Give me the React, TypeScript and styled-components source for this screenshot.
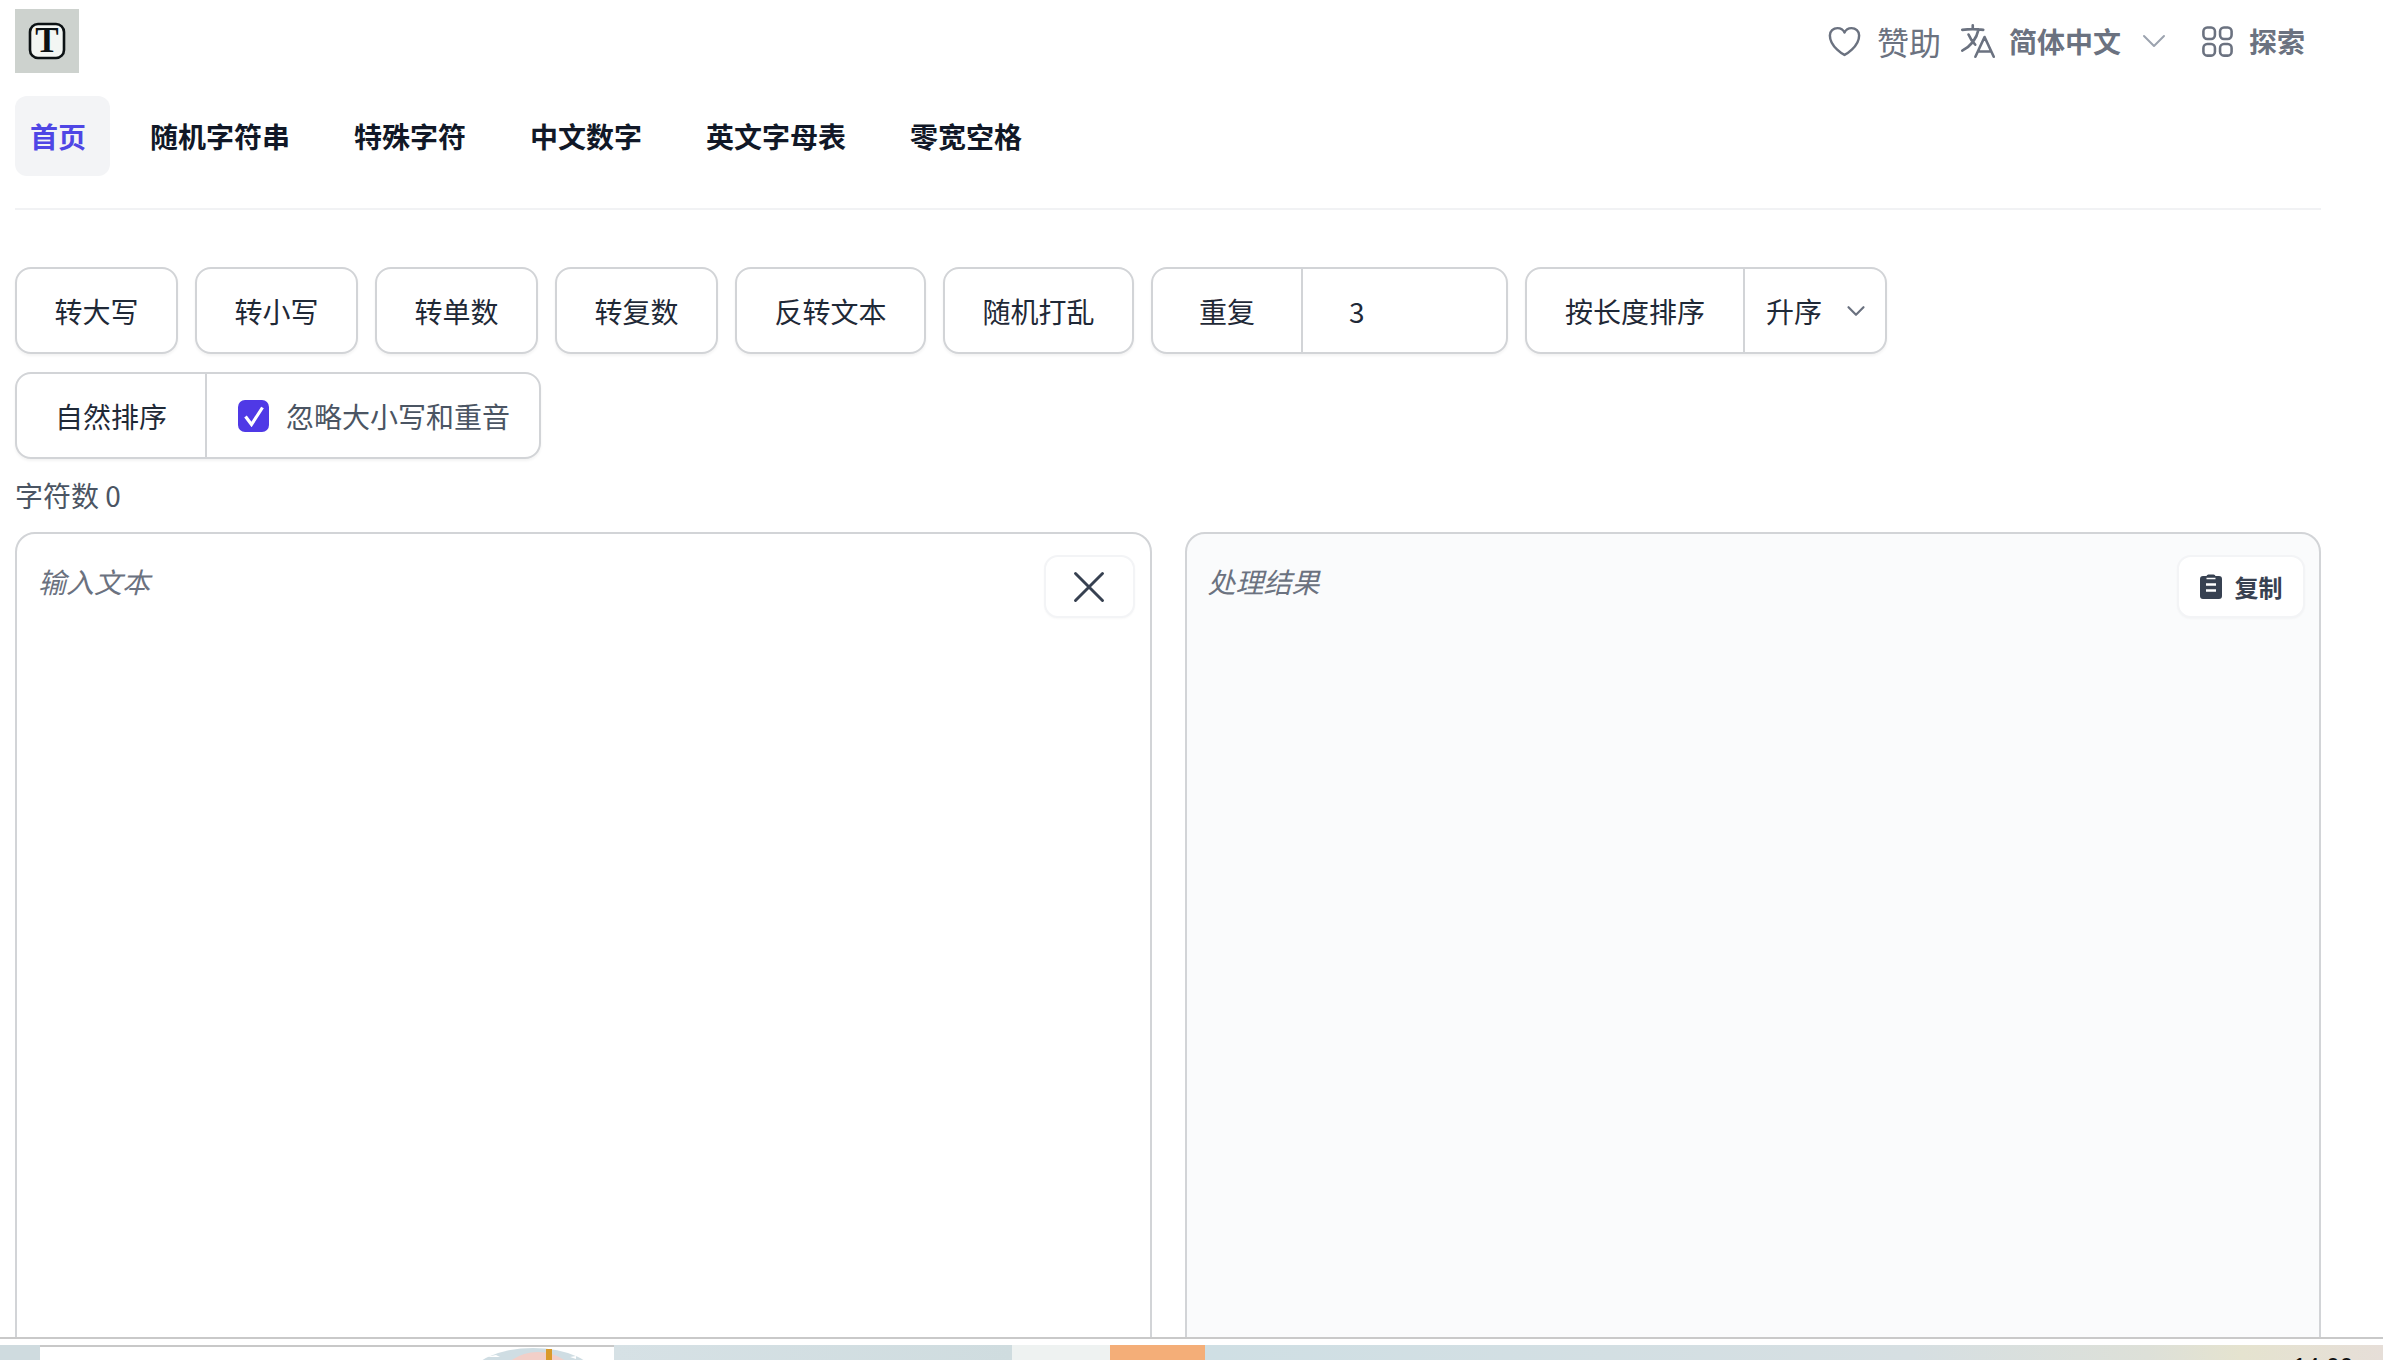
import styled, { createGlobalStyle } from 'styled-components';
import {
  HiOutlineHeart,
  HiOutlineLanguage,
  HiOutlineChevronDown,
  HiOutlineSquares2X2,
  HiOutlineXMark,
} from 'react-icons/hi2';

const GlobalStyle = createGlobalStyle`
  html, body {
    margin: 0;
    height: 100%;
    overflow: hidden;
    background: #fff;
  }
  * { box-sizing: border-box; }
  body, button, input, textarea {
    font-family: "Noto Sans CJK SC", "Liberation Sans", sans-serif;
    font-size: 28px;
  }
`;

const Screen = styled.div`
  width: 2383px;
  height: 1360px;
  overflow: hidden;
  display: flex;
  flex-direction: column;
`;

const Viewport = styled.div`
  height: 1339px;
  flex-shrink: 0;
  overflow: hidden;
  border-bottom: 2px solid #c9c9c9;
  padding: 9px 62px 0 15px;
`;

const TopBar = styled.header`
  display: flex;
  align-items: center;
  justify-content: space-between;
  height: 64px;
  padding-right: 16px;
`;

const Logo = styled.div`
  width: 64px;
  height: 64px;
  background: #cdd2ce;
  display: flex;
  align-items: center;
  justify-content: center;
`;

const TopActions = styled.div`
  display: flex;
  align-items: center;
  color: #6b7280;
`;

const TopItem = styled.span<{ $gap: number }>`
  display: flex;
  align-items: center;
  gap: ${(p) => p.$gap}px;
  margin-left: ${(p) => p.$gap}px;
`;

const DonateText = styled.span`
  font-size: 32px;
  line-height: 40px;
`;

const BoldText = styled.span`
  font-weight: 700;
  line-height: 40px;
`;

const Nav = styled.nav`
  display: flex;
  gap: 28px;
  margin-top: 23px;
  padding-bottom: 32px;
  border-bottom: 2px solid #f1f2f4;
`;

const NavItem = styled.a`
  height: 80px;
  display: flex;
  align-items: center;
  padding: 0 18px;
  border-radius: 12px;
  font-weight: 700;
  color: #111827;
`;

const ActiveNavItem = styled(NavItem)`
  padding: 0 24px 0 15px;
  margin-right: -6px;
  color: #4f46e5;
  background: #f3f4f6;
`;

const Tools = styled.div`
  display: flex;
  flex-wrap: wrap;
  gap: 18px 17px;
  margin-top: 57px;
`;

const ToolButton = styled.button`
  height: 87px;
  padding: 0 37.5px;
  background: #fff;
  color: #1f2937;
  border: 2px solid #d2d4d7;
  border-radius: 16px;
  box-shadow: 0 2px 3px rgba(0, 0, 0, 0.05);
`;

const Group = styled.div`
  height: 87px;
  display: flex;
  background: #fff;
  border: 2px solid #d2d4d7;
  border-radius: 16px;
  box-shadow: 0 2px 3px rgba(0, 0, 0, 0.05);
  overflow: hidden;
`;

const GroupLabel = styled.div<{ $width: number }>`
  width: ${(p) => p.$width}px;
  display: flex;
  align-items: center;
  justify-content: center;
  color: #1f2937;
  border-right: 2px solid #d2d4d7;
`;

const NumberInput = styled.input`
  width: 203px;
  border: none;
  outline: none;
  padding: 0 46px;
  color: #1f2937;
  background: transparent;
`;

const SelectBox = styled.div`
  width: 140px;
  display: flex;
  align-items: center;
  justify-content: space-between;
  padding: 0 17px 0 21px;
  color: #1f2937;
`;

const CheckLabel = styled.label`
  display: flex;
  align-items: center;
  gap: 17px;
  padding: 0 29px 0 31px;
  color: #4b5563;
`;

const CheckMark = styled.span`
  width: 31px;
  height: 32px;
  border-radius: 7px;
  background: #4f39e6;
  display: flex;
  align-items: center;
  justify-content: center;
`;

const Count = styled.div`
  margin-top: 16px;
  line-height: 40px;
  color: #4b5563;
`;

const Panels = styled.div`
  display: grid;
  grid-template-columns: 1fr 1fr;
  gap: 33px;
  margin-top: 17px;
`;

const Panel = styled.div<{ $muted?: boolean }>`
  position: relative;
  height: 900px;
  border: 2px solid #d2d4d7;
  border-radius: 20px;
  background: ${(p) => (p.$muted ? '#fafbfc' : '#fff')};
`;

const TextArea = styled.textarea`
  display: block;
  width: 100%;
  height: 100%;
  padding: 27px 21px;
  border: none;
  outline: none;
  resize: none;
  background: transparent;
  line-height: 40px;
  color: #1f2937;

  &::placeholder {
    color: #6b7280;
    font-style: italic;
    opacity: 1;
  }
`;

const FloatButton = styled.button`
  position: absolute;
  top: 21px;
  right: 15px;
  height: 63px;
  display: flex;
  align-items: center;
  justify-content: center;
  background: #fff;
  border: 2px solid #f3f4f6;
  border-radius: 14px;
  color: #374151;
  box-shadow: 0 1px 2px rgba(0, 0, 0, 0.03);
`;

const ClearButton = styled(FloatButton)`
  width: 91px;
  padding: 0;
`;

const CopyButton = styled(FloatButton)`
  right: 14px;
  width: 128px;
  gap: 13px;
  padding: 0;
  font-size: 24px;
  font-weight: 700;
`;

const Taskbar = styled.footer`
  display: flex;
  height: 15px;
  margin-top: 6px;
  flex-shrink: 0;
  overflow: hidden;
`;

const Tile = styled.div<{ $width?: number; $bg: string }>`
  flex: ${(p) => (p.$width ? `0 0 ${p.$width}px` : '1')};
  background: ${(p) => p.$bg};
`;

const WindowThumb = styled(Tile)`
  border-top: 2px solid #c8c8c8;
  padding: 1px 0 0 430px;
`;

const Tray = styled(Tile)`
  display: flex;
  justify-content: flex-end;
  padding: 8px 30px 0 0;
`;

const Clock = styled.span`
  font-family: "Liberation Sans", sans-serif;
  font-size: 24px;
  line-height: 28px;
  color: #111;
`;

const navItems = ['随机字符串', '特殊字符', '中文数字', '英文字母表', '零宽空格'];
const caseTools = ['转大写', '转小写', '转单数', '转复数', '反转文本', '随机打乱'];

const LogoMark = () => (
  <svg width="40" height="40" viewBox="0 0 40 40">
    <rect x="3" y="3" width="34" height="34" rx="8" fill="#f3f6f3" stroke="#0c1214" strokeWidth="2.6" />
    <text x="20" y="31" textAnchor="middle" fontFamily="Liberation Serif" fontWeight="700" fontSize="35" fill="#0c1214">
      T
    </text>
  </svg>
);

const ClipboardIcon = () => (
  <svg width="22" height="25" viewBox="0 0 22 25">
    <path d="M3 2h3.5a2 2 0 0 1 2-1.5h5a2 2 0 0 1 2 1.5H19a3 3 0 0 1 3 3v17a3 3 0 0 1-3 3H3a3 3 0 0 1-3-3V5a3 3 0 0 1 3-3z" fill="#374151" />
    <path d="M6 10.5h10M6 16.5h10" stroke="#fff" strokeWidth="2.4" />
    <path d="M6.5 4.5h9" stroke="#fff" strokeWidth="1.5" />
  </svg>
);

const Globe = () => (
  <svg width="127" height="12" viewBox="0 0 127 12" style={{ display: 'block' }}>
    <ellipse cx="63" cy="30" rx="63" ry="30" fill="#cfdde3" />
    <ellipse cx="68" cy="30" rx="36" ry="26" fill="#f2cfc8" />
    <path d="M16 9l10-2 4 2zM100 9l6-1v3z" fill="#fff" />
    <rect x="76" y="1" width="6" height="11" fill="#d99a2b" />
  </svg>
);

export default function App() {
  return (
    <Screen>
      <GlobalStyle />
      <Viewport>
        <TopBar>
          <Logo>
            <LogoMark />
          </Logo>
          <TopActions>
            <TopItem $gap={13}>
              <HiOutlineHeart size={39} />
              <DonateText>赞助</DonateText>
            </TopItem>
            <TopItem $gap={16}>
              <HiOutlineLanguage size={42} />
            </TopItem>
            <TopItem $gap={10}>
              <BoldText>简体中文</BoldText>
            </TopItem>
            <TopItem $gap={17}>
              <HiOutlineChevronDown size={32} color="#9ca3af" />
            </TopItem>
            <TopItem $gap={27}>
              <HiOutlineSquares2X2 size={41} />
            </TopItem>
            <TopItem $gap={11}>
              <BoldText>探索</BoldText>
            </TopItem>
          </TopActions>
        </TopBar>

        <Nav>
          <ActiveNavItem>首页</ActiveNavItem>
          {navItems.map((item) => (
            <NavItem key={item}>{item}</NavItem>
          ))}
        </Nav>

        <Tools>
          {caseTools.map((tool) => (
            <ToolButton key={tool}>{tool}</ToolButton>
          ))}
          <Group>
            <GroupLabel $width={150}>重复</GroupLabel>
            <NumberInput defaultValue="3" />
          </Group>
          <Group>
            <GroupLabel $width={218}>按长度排序</GroupLabel>
            <SelectBox>
              升序
              <HiOutlineChevronDown size={24} color="#6b7280" strokeWidth={2.2} />
            </SelectBox>
          </Group>
          <Group>
            <GroupLabel $width={190}>自然排序</GroupLabel>
            <CheckLabel>
              <CheckMark>
                <svg width="22" height="22" viewBox="0 0 22 22">
                  <path d="M2.5 11.5l6 8L19.5 2.5" fill="none" stroke="#fff" strokeWidth="3.2" />
                </svg>
              </CheckMark>
              忽略大小写和重音
            </CheckLabel>
          </Group>
        </Tools>

        <Count>字符数 0</Count>

        <Panels>
          <Panel>
            <TextArea placeholder="输入文本" />
            <ClearButton>
              <HiOutlineXMark size={54} strokeWidth={1.3} />
            </ClearButton>
          </Panel>
          <Panel $muted>
            <TextArea placeholder="处理结果" readOnly />
            <CopyButton>
              <ClipboardIcon />
              复制
            </CopyButton>
          </Panel>
        </Panels>
      </Viewport>

      <Taskbar>
        <Tile $width={40} $bg="#cfdbdf" />
        <WindowThumb $width={574} $bg="#fff">
          <Globe />
        </WindowThumb>
        <Tile $width={398} $bg="linear-gradient(90deg, #d6e1e5, #cfdcdf)" />
        <Tile $width={98} $bg="#eef2f1" />
        <Tile $width={95} $bg="#f4ae78" />
        <Tray $bg="linear-gradient(90deg, #cfdfe4 0%, #d6dfe2 60%, #dde0d8 80%, #e5e3cf 88%, #e6ded8 100%)">
          <Clock>14:00</Clock>
        </Tray>
      </Taskbar>
    </Screen>
  );
}
